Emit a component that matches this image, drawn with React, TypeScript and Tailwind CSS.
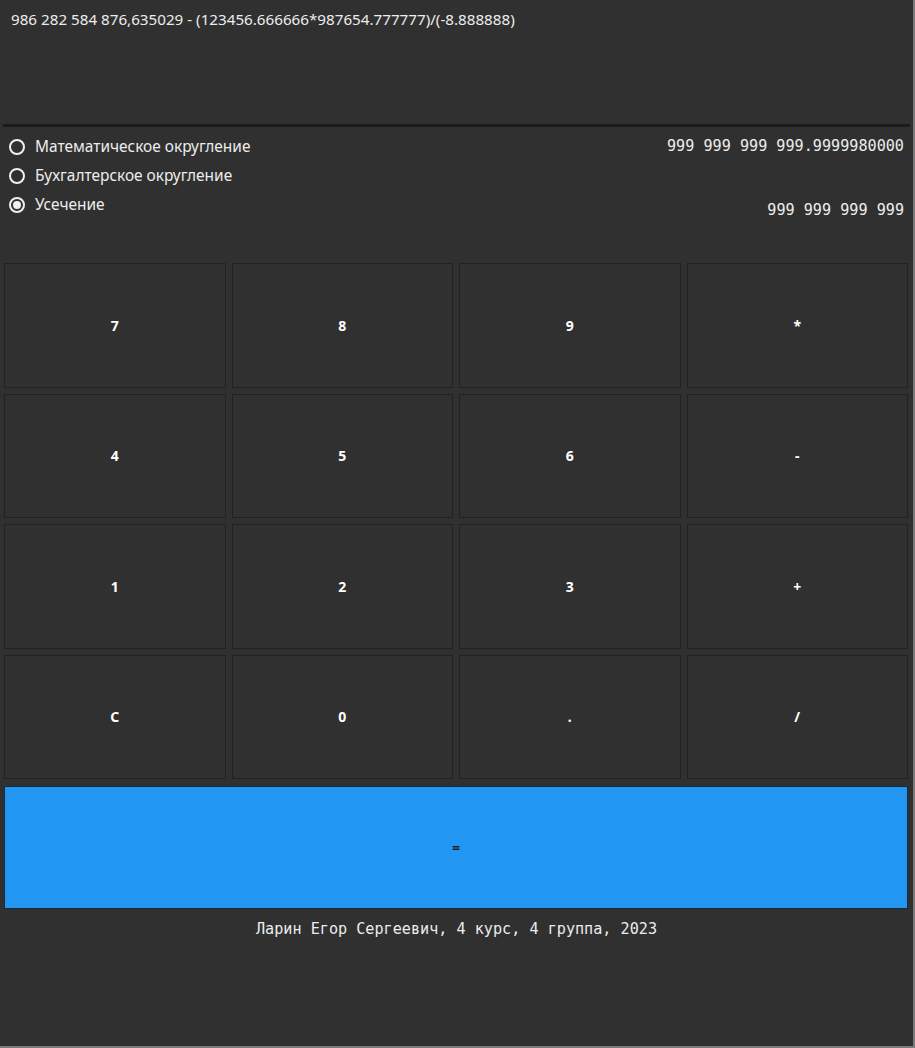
import React from "react";

const keys = ["7", "8", "9", "*", "4", "5", "6", "-", "1", "2", "3", "+", "C", "0", ".", "/"];

function Radio({ label, checked }: { label: string; checked?: boolean }) {
  return (
    <div className="flex items-center h-[29px]">
      <span className="ml-[9px] w-[16px] h-[16px] rounded-full border-2 border-[#f0f0f0] flex items-center justify-center">
        {checked && <span className="w-[8px] h-[8px] rounded-full bg-[#f0f0f0]" />}
      </span>
      <span className="ml-[10px] text-[15.45px] text-[#ececec]" style={{ fontFamily: '"Noto Sans", sans-serif' }}>
        {label}
      </span>
    </div>
  );
}

export default function App() {
  const mono = { fontFamily: '"DejaVu Sans Mono", monospace' };
  return (
    <div className="w-[915px] h-[1048px] bg-[#303030] border-r-2 border-b-2 border-[#7a7a7a] flex flex-col overflow-hidden" style={{ fontFamily: '"Noto Sans", sans-serif' }}>
      <div className="h-[124px] pl-[11px] pt-[9px] text-[15.2px] text-[#ececec] leading-[20px]">
        986 282 584 876,635029 - (123456.666666*987654.777777)/(-8.888888)
      </div>
      <div className="mx-[3px] h-[3px] bg-[#1c1c1c]" />
      <div className="flex justify-between h-[136px] pt-[5px]">
        <div className="flex flex-col">
          <Radio label="Математическое округление" />
          <Radio label="Бухгалтерское округление" />
          <Radio label="Усечение" checked />
        </div>
        <div className="flex flex-col items-end pr-[9px] text-[15.15px] text-[#ececec]" style={mono}>
          <div className="h-[29px] flex items-center">999 999 999 999.9999980000</div>
          <div className="mt-[35px] h-[29px] flex items-center">999 999 999 999</div>
        </div>
      </div>
      <div className="ml-[4px] w-[904px] grid grid-cols-4 gap-x-[6px] gap-y-[6px]">
        {keys.map((k) => (
          <div key={k} className="h-[124.5px] bg-[#303030] border border-[#222222] flex items-center justify-center text-[14px] font-bold text-white">
            {k}
          </div>
        ))}
      </div>
      <div className="ml-[4px] mt-[7px] w-[904px] h-[123px] bg-[#2196f3] border border-[#1b2a38] flex items-center justify-center text-[14px] font-bold text-[#1f1f1f]">
        =
      </div>
      <div className="mt-[9px] text-center text-[15.15px] text-[#ececec]" style={mono}>
        Ларин Егор Сергеевич, 4 курс, 4 группа, 2023
      </div>
    </div>
  );
}
